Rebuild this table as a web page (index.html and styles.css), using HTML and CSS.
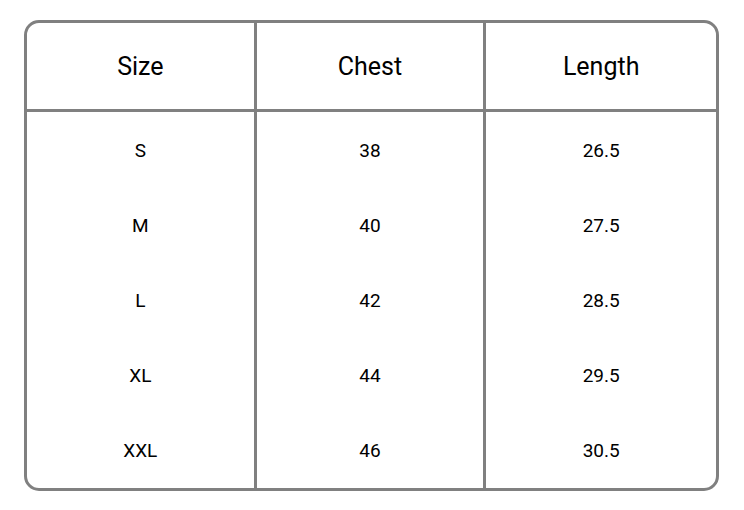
FILE: index.html
```html
<!DOCTYPE html>
<html>
<head>
<meta charset="utf-8">
<link rel="stylesheet" href="styles.css">
</head>
<body>
<div class="page">
  <table class="size-table">
    <thead>
      <tr><th>Size</th><th>Chest</th><th>Length</th></tr>
    </thead>
    <tbody>
      <tr><td>S</td><td>38</td><td>26.5</td></tr>
      <tr><td>M</td><td>40</td><td>27.5</td></tr>
      <tr><td>L</td><td>42</td><td>28.5</td></tr>
      <tr><td>XL</td><td>44</td><td>29.5</td></tr>
      <tr><td>XXL</td><td>46</td><td>30.5</td></tr>
    </tbody>
  </table>
</div>
</body>
</html>
```
FILE: styles.css
```css
html, body {
  margin: 0;
  padding: 0;
  background: #fff;
}
.page {
  padding: 20px 25px 19px 24px;
  font-family: Roboto, "Liberation Sans", sans-serif;
  color: #000;
}
.size-table {
  width: 695px;
  border-collapse: separate;
  border-spacing: 0;
  border: 3px solid #808080;
  border-radius: 15px;
  table-layout: fixed;
}
.size-table th,
.size-table td {
  text-align: center;
  padding: 0;
  border-right: 3px solid #808080;
}
.size-table th:last-child,
.size-table td:last-child {
  border-right: none;
}
.size-table th {
  height: 85px;
  padding-top: 1px;
  font-size: 25px;
  font-weight: 400;
  border-bottom: 3px solid #808080;
}
.size-table td {
  height: 75px;
  font-size: 19px;
}
.size-table tbody tr:first-child td {
  height: 76px;
}
```
